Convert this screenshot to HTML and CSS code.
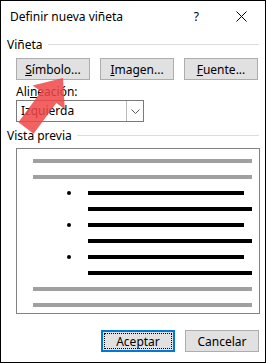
FILE: index.html
```html
<!DOCTYPE html>
<html lang="es">
<head>
    <meta charset="UTF-8">
    <title>Definir nueva viñeta</title>
    <link rel="stylesheet" href="styles.css">
</head>
<body>
    <div class="dialog">
        <div class="title-bar">
            <span class="title">Definir nueva viñeta</span>
            <span class="help">?</span>
            <svg class="close" width="11" height="11" viewBox="0 0 11 11">
                <path d="M0.5 0.5 L10.5 10.5 M10.5 0.5 L0.5 10.5" stroke="#000" stroke-width="1" fill="none"/>
            </svg>
        </div>

        <div class="group-title"><span>Viñeta</span></div>
        <div class="bullet-buttons">
            <button class="btn"><u>S</u>ímbolo...</button>
            <button class="btn"><u>I</u>magen...</button>
            <button class="btn"><u>F</u>uente...</button>
        </div>

        <label class="field-label">Ali<u>n</u>eación:</label>
        <div class="select">
            <span class="select-value">Izquierda</span>
            <span class="select-arrow">
                <svg width="9" height="5" viewBox="0 0 9 5">
                    <path d="M0.5 0.5 L4.5 4.5 L8.5 0.5" stroke="#555" stroke-width="1" fill="none"/>
                </svg>
            </span>
        </div>

        <div class="group-title"><span>Vista previa</span></div>
        <div class="preview">
            <div class="bar gray"></div>
            <div class="bar gray"></div>
            <div class="item"><i class="dot"></i><div class="bar black short"></div></div>
            <div class="item"><div class="bar black"></div></div>
            <div class="item"><i class="dot"></i><div class="bar black short"></div></div>
            <div class="item"><div class="bar black"></div></div>
            <div class="item"><i class="dot"></i><div class="bar black short"></div></div>
            <div class="item"><div class="bar black"></div></div>
            <div class="bar gray"></div>
            <div class="bar gray"></div>
        </div>

        <div class="footer">
            <button class="btn primary"><span class="focus">Aceptar</span></button>
            <button class="btn">Cancelar</button>
        </div>

        <!-- annotation arrow over the dialog -->
        <svg class="pointer" width="266" height="363" viewBox="0 0 266 363">
            <polygon points="63,78 64.8,109.2 56.3,103 33.6,133.7 18.4,122.3 41.1,91.6 32.6,85.4" fill="#f04646" fill-opacity="0.85"/>
        </svg>
    </div>
</body>
</html>
```

FILE: styles.css
```css
* {
    margin: 0;
    padding: 0;
    box-sizing: border-box;
    font-family: 'Noto Sans', 'Open Sans', sans-serif;
}

body {
    background-color: #fff;
}

.dialog {
    position: relative;
    width: 266px;
    height: 363px;
    border: 1px solid #000;
    background-color: #fff;
    color: #000;
    font-size: 12px;
}

.title-bar {
    display: flex;
    align-items: center;
    height: 30px;
    padding-left: 9px;
}

.title {
    flex: 1;
}

.help {
    margin-right: 37px;
}

.close {
    margin-right: 18px;
}

.group-title {
    display: flex;
    align-items: center;
    height: 16px;
    margin-top: 5px;
    padding: 0 6px 0 6px;
}

.group-title::after {
    content: "";
    flex: 1;
    height: 1px;
    margin-left: 5px;
    background-color: #dcdcdc;
}

.bullet-buttons {
    display: flex;
    gap: 10px;
    margin-top: 6px;
    padding-left: 15px;
}

.btn {
    width: 74px;
    height: 22px;
    border: 1px solid #adadad;
    background-color: #e1e1e1;
    font-size: 12px;
    color: #000;
}

.field-label {
    display: block;
    height: 16px;
    line-height: 16px;
    margin: 4px 0 0 15px;
}

.select {
    display: flex;
    width: 128px;
    height: 22px;
    margin-left: 15px;
    border: 1px solid #7a7a7a;
}

.select-value {
    flex: 1;
    line-height: 20px;
    padding-left: 4px;
}

.select-arrow {
    display: flex;
    align-items: center;
    justify-content: center;
    width: 17px;
    border-left: 1px solid #b9b9b9;
    background-color: #fff;
}

.group-title + .preview {
    margin-top: 5px;
}

.preview {
    display: flex;
    flex-direction: column;
    gap: 12px;
    width: 244px;
    height: 166px;
    margin-left: 15px;
    padding: 10px 7px 0 16px;
    border: 1px solid #828282;
}

.bar {
    height: 4px;
}

.bar.gray {
    background-color: #a0a0a0;
}

.bar.black {
    background-color: #000;
    flex: 1;
}

.bar.short {
    margin-right: 8px;
}

.item {
    display: flex;
    align-items: center;
    height: 4px;
    padding-left: 55px;
    position: relative;
}

.dot {
    position: absolute;
    left: 34px;
    width: 4px;
    height: 4px;
    border-radius: 50%;
    background-color: #000;
}

.footer {
    display: flex;
    justify-content: flex-end;
    gap: 10px;
    margin-top: 16px;
    padding-right: 6px;
}

.btn.primary {
    border: 2px solid #0078d7;
    padding: 1px;
}

.focus {
    display: flex;
    align-items: center;
    justify-content: center;
    height: 100%;
    border: 1px dotted #000;
}

.pointer {
    position: absolute;
    left: -1px;
    top: -1px;
    pointer-events: none;
}
```
